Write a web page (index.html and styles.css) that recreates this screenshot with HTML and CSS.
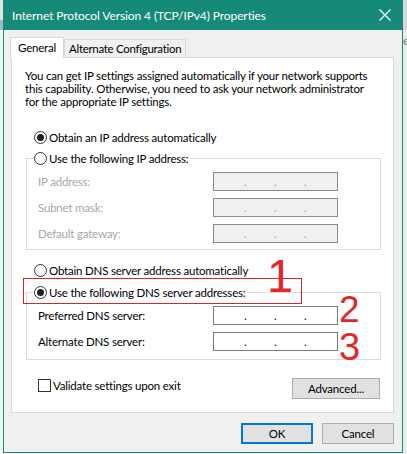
FILE: index.html
```html
<!DOCTYPE html>
<html>
<head>
  <meta charset="UTF-8">
  <title>Internet Protocol Version 4 (TCP/IPv4) Properties</title>
  <link rel="stylesheet" href="styles.css">
</head>
<body>
  <div class="screen">
    <div class="edge-left"></div>

    <div class="window">
      <div class="titlebar">
        <span class="title">Internet Protocol Version 4 (TCP/IPv4) Properties</span>
        <svg class="close" width="12" height="12" viewBox="0 0 12 12">
          <path d="M0.5 0.5 L11.5 11.5 M11.5 0.5 L0.5 11.5" stroke="#fff" stroke-width="1.2" fill="none"/>
        </svg>
      </div>

      <div class="client">
        <div class="tabs">
          <div class="tab active">General</div>
          <div class="tab">Alternate Configuration</div>
        </div>

        <div class="panel">
          <p class="intro">You can get IP settings assigned automatically if your network supports<br>
            this capability. Otherwise, you need to ask your network administrator<br>
            for the appropriate IP settings.</p>

          <div class="option first"><span class="radio on"></span>Obtain an IP address automatically</div>

          <fieldset class="group">
            <legend class="option"><span class="radio"></span>Use the following IP address:</legend>
            <div class="field disabled"><span class="label">IP address:</span><span class="ip"><i>.</i><i>.</i><i>.</i></span></div>
            <div class="field disabled"><span class="label">Subnet mask:</span><span class="ip"><i>.</i><i>.</i><i>.</i></span></div>
            <div class="field disabled"><span class="label">Default gateway:</span><span class="ip"><i>.</i><i>.</i><i>.</i></span></div>
          </fieldset>

          <div class="option dns-auto"><span class="radio"></span>Obtain DNS server address automatically</div>

          <fieldset class="group dns">
            <legend class="option"><span class="radio on"></span>Use the following DNS server addresses:</legend>
            <div class="field"><span class="label">Preferred DNS server:</span><span class="ip"><i>.</i><i>.</i><i>.</i></span></div>
            <div class="field"><span class="label">Alternate DNS server:</span><span class="ip"><i>.</i><i>.</i><i>.</i></span></div>
          </fieldset>

          <div class="bottom-row">
            <div class="check"><span class="box"></span>Validate settings upon exit</div>
            <div class="btn advanced">Advanced...</div>
          </div>

          <!-- red annotations drawn over the dialog -->
          <div class="note-box"></div>
          <span class="mark one">1</span>
          <span class="mark two">2</span>
          <span class="mark three">3</span>
        </div>

        <div class="buttons">
          <div class="btn default">OK</div>
          <div class="btn">Cancel</div>
        </div>
      </div>
    </div>

    <div class="edge-right"><span>e</span></div>
  </div>
</body>
</html>
```

FILE: styles.css
```css
body {
  margin: 0;
  font-family: Lato, "Noto Sans", sans-serif;
  font-size: 11.5px;
  letter-spacing: -0.2px;
  color: #000;
  background: #fafafa;
}
.screen {
  display: flex;
  height: 454px;
  width: 407px;
  overflow: hidden;
}
.edge-left {
  width: 3px;
  background: linear-gradient(#e4e4e4 0 20px, #9fb7c9 20px 30px, #f6f6f6 30px);
}
.edge-right {
  width: 4px;
  background: linear-gradient(#d7d7d7 0 30px, #ececec 30px);
  overflow: hidden;
  font-size: 12px;
  color: #777;
}
.edge-right span {
  display: block;
  margin-top: 33px;
}
.window {
  width: 400px;
  height: 453px;
  box-sizing: border-box;
  border: 1px solid #168a78;
  border-top: none;
  display: flex;
  flex-direction: column;
  background: #f0f0f0;
}
.titlebar {
  height: 30px;
  background: #168a78;
  color: #fff;
  display: flex;
  align-items: center;
  justify-content: space-between;
  padding: 0 11px 0 8px;
}
.title {
  font-size: 12px;
  letter-spacing: -0.1px;
}
.close {
  margin-top: -1px;
}
.client {
  flex: 1;
  padding: 7px 8px 0 7px;
}
.tabs {
  display: flex;
  align-items: flex-end;
  height: 20px;
  position: relative;
  z-index: 1;
}
.tab {
  height: 18px;
  box-sizing: border-box;
  border: 1px solid #d9d9d9;
  border-bottom: none;
  padding: 0 4px;
  line-height: 17px;
  letter-spacing: -0.3px;
  background: #f0f0f0;
}
.tab.active {
  height: 21px;
  margin-left: -1px;
  margin-bottom: -1px;
  background: #fff;
  padding: 0 7px;
  line-height: 19px;
  letter-spacing: -0.2px;
}
.panel {
  position: relative;
  background: #fff;
  border: 1px solid #d9d9d9;
  height: 356px;
  box-sizing: border-box;
  padding: 0 12px 0 13px;
}
.intro {
  margin: 11px 0 0;
  line-height: 13px;
  white-space: nowrap;
}
.option {
  display: flex;
  align-items: center;
  height: 13px;
  line-height: 13px;
  white-space: nowrap;
}
.option.first {
  margin: 23px 0 0 9px;
}
.radio {
  width: 13px;
  height: 13px;
  box-sizing: border-box;
  border: 1px solid #333;
  border-radius: 50%;
  margin-right: 2px;
  display: flex;
  align-items: center;
  justify-content: center;
  flex-shrink: 0;
}
.radio.on::after {
  content: "";
  width: 7px;
  height: 7px;
  border-radius: 50%;
  background: #222;
}
.group {
  margin: 8px 0 0 1px;
  padding: 0 0 6px 11px;
  border: 1px solid #dcdcdc;
}
.group legend {
  padding: 0 1px 0 0;
  margin-left: -4px;
  background: #fff;
}
.field {
  display: flex;
  align-items: center;
  margin-top: 7px;
  height: 19px;
}
.label {
  width: 175px;
}
.disabled .label {
  color: #a6a6a6;
}
.ip {
  width: 125px;
  height: 19px;
  box-sizing: border-box;
  border: 1px solid #7a7a7a;
  background: #fff;
  display: flex;
  padding-left: 30px;
  gap: 26px;
  line-height: 17px;
}
.ip i {
  font-style: normal;
  width: 4px;
}
.disabled .ip {
  background: #f0f0f0;
  border-color: #8a8a8a;
  color: #9a9a9a;
}
.dns-auto {
  margin: 14px 0 0 9px;
}
.group.dns {
  margin-top: 9px;
  padding-bottom: 8px;
}
.mark {
  position: absolute;
  color: #e3262a;
  font-family: "Liberation Sans", Arial, sans-serif;
  line-height: 1;
  letter-spacing: 0;
}
.mark.one {
  left: 255px;
  top: 194px;
  font-size: 47px;
}
.mark.two {
  left: 327px;
  top: 233px;
  font-size: 37px;
}
.mark.three {
  left: 327px;
  top: 270px;
  font-size: 38px;
}
.note-box {
  position: absolute;
  left: 11px;
  top: 220px;
  width: 277px;
  height: 24px;
  border: 1px solid #d9262b;
}
.bottom-row {
  display: flex;
  justify-content: space-between;
  align-items: flex-start;
  margin-top: 18px;
  padding: 0 1px 0 13px;
}
.check {
  display: flex;
  align-items: center;
  height: 13px;
  margin-top: 1px;
}
.box {
  width: 13px;
  height: 13px;
  box-sizing: border-box;
  border: 1px solid #333;
  margin-right: 2px;
}
.btn {
  width: 72px;
  height: 21px;
  box-sizing: border-box;
  border: 1px solid #adadad;
  background: #e1e1e1;
  display: flex;
  align-items: center;
  justify-content: center;
}
.btn.advanced {
  width: 88px;
}
.btn.default {
  border: 2px solid #0078d7;
}
.buttons {
  display: flex;
  justify-content: flex-end;
  gap: 9px;
  margin-top: 10px;
}
```
